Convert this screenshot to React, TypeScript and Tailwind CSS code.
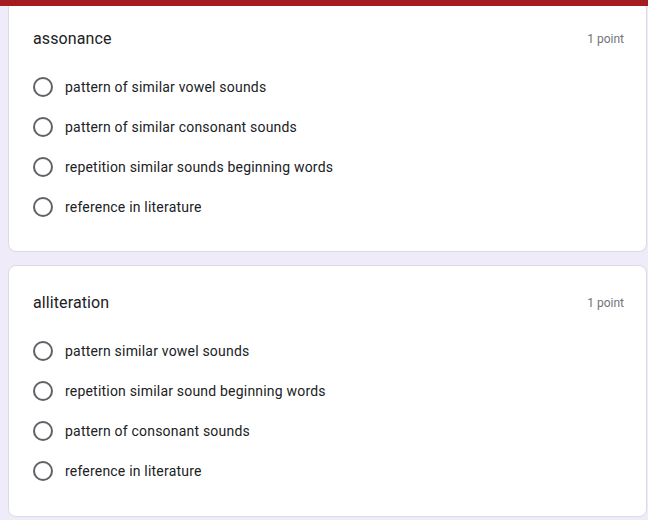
import { useState } from "react";

interface Question {
  id: string;
  title: string;
  options: string[];
}

const questions: Question[] = [
  {
    id: "q1",
    title: "assonance",
    options: [
      "pattern of similar vowel sounds",
      "pattern of similar consonant sounds",
      "repetition similar sounds beginning words",
      "reference in literature",
    ],
  },
  {
    id: "q2",
    title: "alliteration",
    options: [
      "pattern similar vowel sounds",
      "repetition similar sound beginning words",
      "pattern of consonant sounds",
      "reference in literature",
    ],
  },
];

function QuestionCard({ q, first }: { q: Question; first?: boolean }) {
  const [selected, setSelected] = useState<number | null>(null);

  return (
    <div
      className={`bg-white border border-[#dadce0] flex flex-col px-6 ${
        first
          ? "rounded-b-lg border-t-0 h-[246px] pt-[21px]"
          : "rounded-lg h-[252px] pt-[25px] mt-[13px]"
      }`}
    >
      {/* Header */}
      <div className="flex items-center justify-between h-6">
        <h2 className="text-[16px] leading-6 text-[#202124] font-['Roboto',sans-serif] tracking-[0.1px]">
          {q.title}
        </h2>
        <span className="text-[12px] text-[#70757a] font-['Roboto',sans-serif] mr-[-2px]">
          1 point
        </span>
      </div>

      {/* Options */}
      <div className="flex flex-col mt-4">
        {q.options.map((opt, i) => (
          <label
            key={i}
            onClick={() => setSelected(i)}
            className="h-10 flex items-center gap-3 cursor-pointer"
          >
            <span className="w-5 h-5 rounded-full border-2 border-[#5f6368] flex items-center justify-center">
              {selected === i && (
                <span className="w-2.5 h-2.5 rounded-full bg-[#a51c20]" />
              )}
            </span>
            <span className="text-[14px] text-[#202124] font-['Roboto',sans-serif] tracking-[0.2px]">
              {opt}
            </span>
          </label>
        ))}
      </div>
    </div>
  );
}

export default function App() {
  return (
    <div className="w-[648px] h-[520px] bg-[#f0ebf8] overflow-hidden flex flex-col">
      <div className="h-[6px] bg-[#a51c20] shrink-0" />
      <div className="pl-2 pr-[1px] flex flex-col">
        {questions.map((q, i) => (
          <QuestionCard key={q.id} q={q} first={i === 0} />
        ))}
      </div>
    </div>
  );
}
